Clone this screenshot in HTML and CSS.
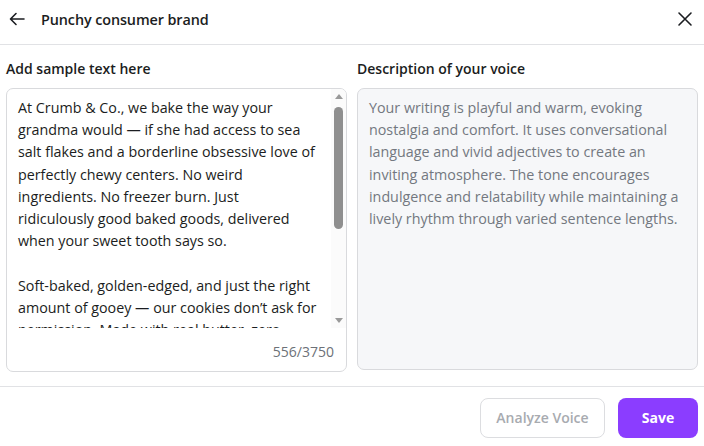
FILE: index.html
```html
<!DOCTYPE html>
<html>
<head>
<meta charset="utf-8">
<link rel="stylesheet" href="styles.css">
</head>
<body>
<div class="dialog">
  <header class="header">
    <div class="header-left">
      <svg class="icon back" width="18" height="18" viewBox="0 0 18 18"><path d="M16 9H3M8 3.5L2.5 9 8 14.5" fill="none" stroke="#1b1d21" stroke-width="1.6" stroke-linecap="round" stroke-linejoin="round"/></svg>
      <span class="title">Punchy consumer brand</span>
    </div>
    <svg class="icon close" width="16" height="16" viewBox="0 0 16 16"><path d="M2 2L14 14M14 2L2 14" fill="none" stroke="#1b1d21" stroke-width="1.6" stroke-linecap="round"/></svg>
  </header>
  <main class="body">
    <section class="col">
      <div class="label">Add sample text here</div>
      <div class="box sample">
        <div class="text-row">
          <div class="scroll">At Crumb &amp; Co., we bake the way your
grandma would — if she had access to sea
salt flakes and a borderline obsessive love of
perfectly chewy centers. No weird
ingredients. No freezer burn. Just
ridiculously good baked goods, delivered
when your sweet tooth says so.

Soft-baked, golden-edged, and just the right
amount of gooey — our cookies don’t ask for
permission. Made with real butter, zero shortcuts, and a whole lot of heart, every batch is mixed, scooped and baked fresh so it tastes like it came straight from your own oven.</div>
          <div class="scrollbar">
            <span class="arrow up"></span>
            <span class="thumb"></span>
            <span class="track-rest"></span>
            <span class="arrow down"></span>
          </div>
        </div>
        <div class="counter">556/3750</div>
      </div>
    </section>
    <section class="col">
      <div class="label">Description of your voice</div>
      <div class="box desc">Your writing is playful and warm, evoking nostalgia and comfort. It uses conversational language and vivid adjectives to create an inviting atmosphere. The tone encourages indulgence and relatability while maintaining a lively rhythm through varied sentence lengths.</div>
    </section>
  </main>
  <footer class="footer">
    <button class="btn secondary">Analyze Voice</button>
    <button class="btn primary">Save</button>
  </footer>
</div>
</body>
</html>
```
FILE: styles.css
```css
* { box-sizing: border-box; }
html, body { margin: 0; padding: 0; background: #fff; }
body {
  font-family: "Open Sans", "Noto Sans", sans-serif;
  color: #1b1d21;
  width: 704px;
  height: 446px;
  overflow: hidden;
}
.dialog { display: flex; flex-direction: column; height: 446px; }
.header {
  height: 45px;
  border-bottom: 1px solid #e1e2e5;
  display: flex;
  align-items: center;
  justify-content: space-between;
  padding: 0 11px 6px 8px;
}
.header-left { display: flex; align-items: center; gap: 15px; }
.title { font-size: 14.4px; font-weight: 600; letter-spacing: -0.1px; }
.body {
  display: flex;
  gap: 10px;
  padding: 14px 6px 14px 6px;
  height: 342px;
  border-bottom: 1px solid #e1e2e5;
}
.col { flex: 1; display: flex; flex-direction: column; min-width: 0; }
.label { font-size: 14px; font-weight: 600; height: 29px; line-height: 19px; }
.box {
  flex: 1;
  border: 1px solid #d9dadd;
  border-radius: 7px;
}
.sample { display: flex; flex-direction: column; overflow: hidden; }
.text-row { display: flex; height: 239px; }
.scroll {
  flex: 1;
  overflow: hidden;
  white-space: pre-wrap;
  font-size: 14.3px;
  line-height: 22.2px;
  padding: 8px 4px 0 11px;
  color: #1b1d21;
}
.scrollbar {
  width: 15px;
  display: flex;
  flex-direction: column;
  align-items: center;
  background: #fbfbfb;
  padding-top: 5px;
}
.arrow { width: 0; height: 0; border-left: 4px solid transparent; border-right: 4px solid transparent; }
.arrow.up { border-bottom: 5px solid #9a9a9a; }
.arrow.down { border-top: 5px solid #9a9a9a; margin-bottom: 5px; }
.thumb {
  width: 9px;
  height: 122px;
  margin-top: 8px;
  background: #8f8f8f;
  border-radius: 5px;
}
.track-rest { flex: 1; }
.counter {
  text-align: right;
  font-size: 14px;
  color: #6d7178;
  padding: 14px 12px 0 0;
}
.desc {
  background: #f6f7f9;
  color: #737880;
  font-size: 14.3px;
  line-height: 22.2px;
  padding: 8px 10px 0 11px;
  margin-bottom: 2px;
}
.footer {
  flex: 1;
  display: flex;
  justify-content: flex-end;
  align-items: center;
  gap: 13px;
  padding: 2px 6px 0 0;
}
.btn {
  font-family: inherit;
  font-size: 14px;
  font-weight: 600;
  height: 40px;
  border-radius: 8px;
  cursor: pointer;
}
.secondary {
  width: 125px;
  background: #fff;
  border: 1px solid #dcdde0;
  color: #a8abb0;
}
.primary {
  width: 80px;
  background: #8b3dff;
  border: none;
  color: #fff;
  font-weight: 700;
}
```
